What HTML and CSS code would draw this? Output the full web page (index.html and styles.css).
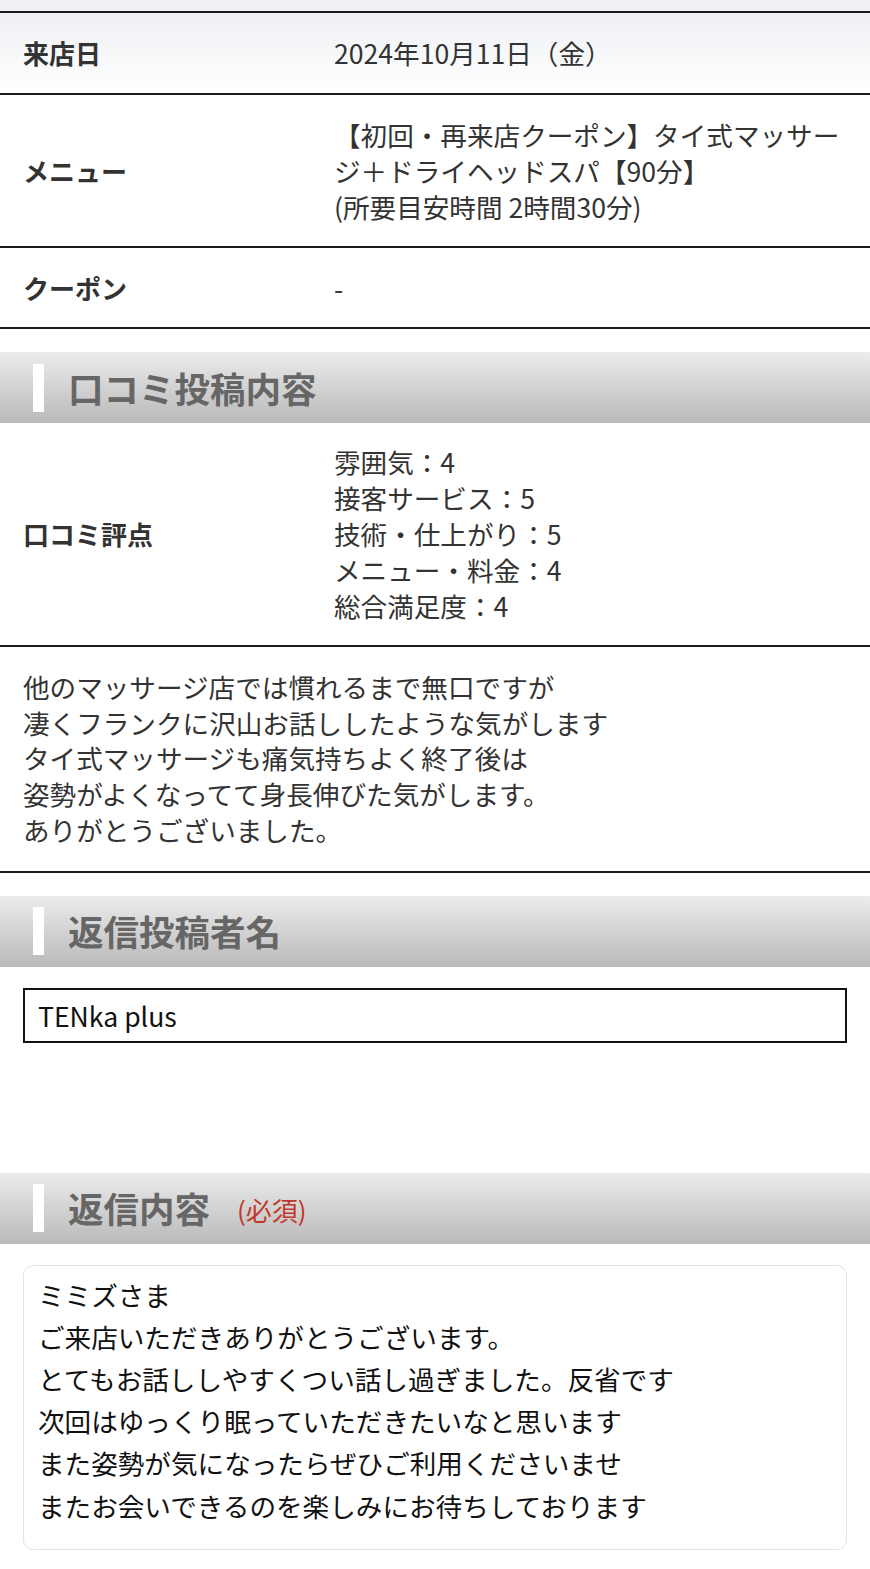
FILE: index.html
```html
<!DOCTYPE html>
<html lang="ja">
<head>
<meta charset="utf-8">
<link rel="stylesheet" href="styles.css">
</head>
<body>
<div class="top-fade"></div>
<div class="info">
  <div class="row row-first">
    <div class="label">来店日</div>
    <div class="value">2024年10月11日（金）</div>
  </div>
  <div class="row row-mid">
    <div class="label">メニュー</div>
    <div class="value">【初回・再来店クーポン】タイ式マッサージ＋ドライヘッドスパ【90分】<br>(所要目安時間 2時間30分)</div>
  </div>
  <div class="row row-mid">
    <div class="label">クーポン</div>
    <div class="value">-</div>
  </div>
</div>

<h2 class="sec-head"><span class="bar"></span>口コミ投稿内容</h2>
<div class="info info-review">
  <div class="row">
    <div class="label">口コミ評点</div>
    <div class="value">雰囲気：4<br>接客サービス：5<br>技術・仕上がり：5<br>メニュー・料金：4<br>総合満足度：4</div>
  </div>
  <div class="comment">他のマッサージ店では慣れるまで無口ですが<br>凄くフランクに沢山お話ししたような気がします<br>タイ式マッサージも痛気持ちよく終了後は<br>姿勢がよくなってて身長伸びた気がします。<br>ありがとうございました。</div>
</div>

<h2 class="sec-head"><span class="bar"></span>返信投稿者名</h2>
<div class="field-wrap">
  <div class="input">TENka plus</div>
</div>

<h2 class="sec-head sec-head-reply"><span class="bar"></span>返信内容<span class="req">(必須)</span></h2>
<div class="field-wrap">
  <div class="textarea">ミミズさま<br>ご来店いただきありがとうございます。<br>とてもお話ししやすくつい話し過ぎました。反省です<br>次回はゆっくり眠っていただきたいなと思います<br>また姿勢が気になったらぜひご利用くださいませ<br>またお会いできるのを楽しみにお待ちしております</div>
</div>
</body>
</html>
```
FILE: styles.css
```css
html, body {
  margin: 0;
  padding: 0;
  background: #fff;
}
body {
  font-family: "Noto Sans CJK JP", "Noto Sans", sans-serif;
  color: #333;
  font-size: 26.6px;
  width: 870px;
}
.top-fade {
  height: 11px;
  background: #eef0f3;
}
.info {
  border-top: 2px solid #1a1a1a;
}
.info-review {
  border-top: none;
}
.row {
  display: grid;
  grid-template-columns: 334px 1fr;
  align-items: center;
  border-bottom: 2px solid #1a1a1a;
  padding: 21px 0;
  line-height: 36px;
}
.row-first {
  padding: 22px 0;
  background: linear-gradient(#eef0f4, #ffffff);
}
.row-mid {
  padding: 22px 0 21px;
}
.label {
  padding-left: 23px;
  font-weight: bold;
  font-size: 26px;
  color: #333;
}
.value {
  padding-right: 20px;
  color: #333;
}
.sec-head {
  margin: 23px 0 0;
  height: 71px;
  display: flex;
  align-items: center;
  padding-left: 33px;
  background: linear-gradient(#ececec, #b9b9b9);
  font-size: 35.5px;
  font-weight: bold;
  color: #666;
  line-height: 1;
}
.bar {
  width: 11px;
  height: 48px;
  background: #fff;
  margin-right: 24px;
}
.req {
  font-size: 26px;
  font-weight: normal;
  color: #c0392b;
  margin-left: 27px;
  margin-top: 4px;
}
.comment {
  padding: 22px 23px 23px;
  line-height: 35.7px;
  border-bottom: 2px solid #1a1a1a;
  color: #333;
}
.field-wrap {
  padding: 21px 23px 0 23px;
}
.input {
  height: 51px;
  border: 2px solid #111;
  padding-left: 13px;
  line-height: 51px;
  color: #111;
}
.sec-head-reply {
  margin-top: 130px;
}
.textarea {
  border: 1px solid #e4e4e4;
  border-radius: 10px;
  padding: 8px 14px 22px;
  line-height: 42.2px;
  color: #111;
}
```
